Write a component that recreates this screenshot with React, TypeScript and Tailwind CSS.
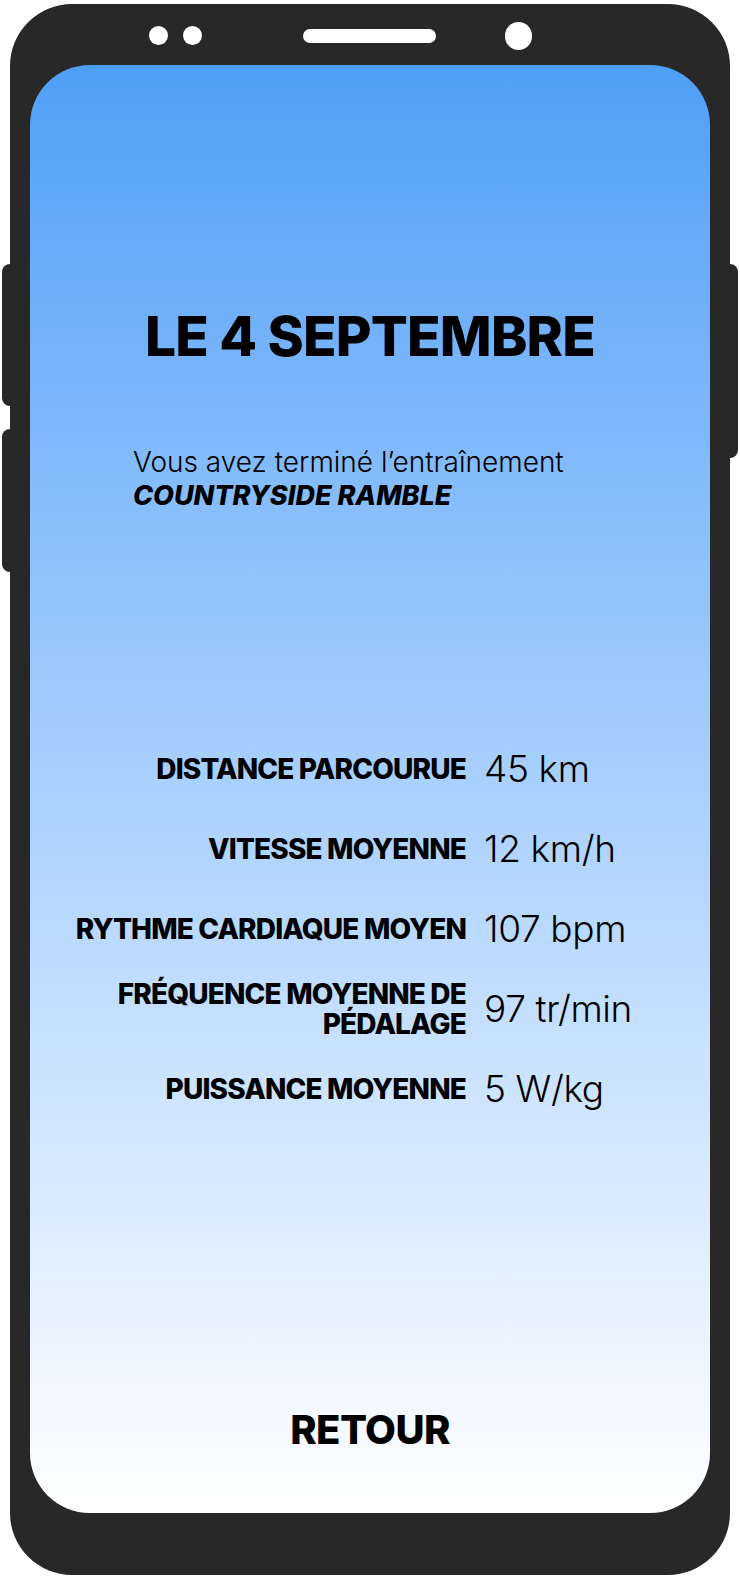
import React from "react";

const stats: { label: React.ReactNode; value: string }[] = [
  { label: "DISTANCE PARCOURUE", value: "45 km" },
  { label: "VITESSE MOYENNE", value: "12 km/h" },
  { label: "RYTHME CARDIAQUE MOYEN", value: "107 bpm" },
  {
    label: (
      <>
        FRÉQUENCE MOYENNE DE
        <br />
        PÉDALAGE
      </>
    ),
    value: "97 tr/min",
  },
  { label: "PUISSANCE MOYENNE", value: "5 W/kg" },
];

export default function App() {
  return (
    <div
      className="relative w-[740px] h-[1578px] bg-white overflow-hidden"
      style={{ fontFamily: "Inter, 'Noto Sans', sans-serif" }}
    >
      {/* side buttons */}
      <div className="absolute left-[2px] top-[264px] w-[12px] h-[142px] rounded-l-[8px] bg-[#282828]" />
      <div className="absolute left-[2px] top-[429px] w-[12px] h-[143px] rounded-l-[8px] bg-[#282828]" />
      <div className="absolute left-[726px] top-[264px] w-[12px] h-[194px] rounded-r-[8px] bg-[#282828]" />

      {/* phone body */}
      <div className="absolute left-[10px] top-[4px] w-[720px] h-[1571px] rounded-[62px] bg-[#282828] flex flex-col items-center">
        {/* top bar */}
        <div className="w-full h-[61px] flex items-center pl-[139px] pt-[2px]">
          <div className="w-[19px] h-[19px] rounded-full bg-white" />
          <div className="w-[19px] h-[19px] rounded-full bg-white ml-[15px]" />
          <div className="w-[133px] h-[14px] rounded-full bg-white ml-[101px]" />
          <div className="w-[27px] h-[28px] rounded-full bg-white ml-[69px]" />
        </div>

        {/* screen */}
        <div className="w-[680px] h-[1448px] rounded-[60px] bg-gradient-to-b from-[#4f9ff7] to-[#ffffff] flex flex-col items-center text-black">
          <h1 className="mt-[244px] text-[55px] leading-[55px] font-extrabold tracking-[-0.015em]">
            LE 4 SEPTEMBRE
          </h1>

          <div className="self-stretch pl-[103px] mt-[81px]">
            <p className="text-[28px] leading-[34px] font-light">
              Vous avez terminé l’entraînement
            </p>
            <p className="text-[27px] leading-[34px] font-extrabold italic">
              COUNTRYSIDE RAMBLE
            </p>
          </div>

          <div className="self-stretch mt-[228px] grid grid-cols-[436px_1fr] gap-x-[18px] gap-y-[24px] auto-rows-[56px]">
            {stats.map((s, i) => (
              <React.Fragment key={i}>
                <div className="flex items-center justify-end text-right text-[28px] leading-[30px] font-extrabold tracking-[-0.03em]">
                  <span>{s.label}</span>
                </div>
                <div className="flex items-center text-[37px] leading-[44px] font-light tracking-[-0.01em]">
                  {s.value}
                </div>
              </React.Fragment>
            ))}
          </div>

          <div className="mt-auto mb-[61px] text-[40px] leading-[44px] font-extrabold tracking-[-0.015em]">
            RETOUR
          </div>
        </div>
      </div>
    </div>
  );
}
